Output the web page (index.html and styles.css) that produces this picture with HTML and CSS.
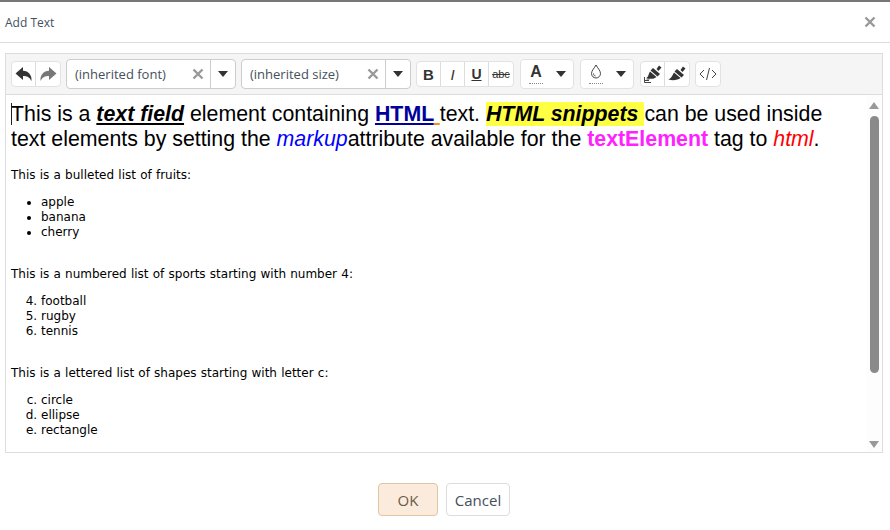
FILE: index.html
```html
<!DOCTYPE html>
<html lang="en">
<head>
    <meta charset="UTF-8">
    <meta name="viewport" content="width=device-width, initial-scale=1.0">
    <title>Add Text</title>
    <link rel="stylesheet" href="styles.css">
</head>
<body>

<div class="dialog">
    <div class="dialog-header">
        <span class="dialog-title">Add Text</span>
        <svg class="close-icon" width="12" height="12" viewBox="0 0 12 12"><path d="M1.5 1.5 L10.5 10.5 M10.5 1.5 L1.5 10.5"/></svg>
    </div>

    <div class="editor">
        <div class="toolbar">
            <div class="btn-group">
                <button class="tool-btn wide"><svg width="20" height="16" viewBox="0 0 20 16"><path class="dark" d="M9 1 L1.500 7.500 L9 14 L9 10 C13 10 15.500 11 17.500 15 C18 9 14.500 5 9 4.800 Z"/></svg></button>
                <button class="tool-btn wide"><svg width="20" height="16" viewBox="0 0 20 16"><path class="muted" d="M11 1 L18.500 7.500 L11 14 L11 10 C7 10 4.500 11 2.500 15 C2 9 5.500 5 11 4.800 Z"/></svg></button>
            </div>
            <div class="select-box">
                <span class="select-value">(inherited font)</span>
                <svg class="clear-icon" width="12" height="12" viewBox="0 0 12 12"><path d="M1.500 1.500 L10.500 10.500 M10.500 1.500 L1.500 10.500"/></svg>
                <span class="select-arrow"><span class="caret"></span></span>
            </div>
            <div class="select-box">
                <span class="select-value">(inherited size)</span>
                <svg class="clear-icon" width="12" height="12" viewBox="0 0 12 12"><path d="M1.500 1.500 L10.500 10.500 M10.500 1.500 L1.500 10.500"/></svg>
                <span class="select-arrow"><span class="caret"></span></span>
            </div>
            <div class="btn-group group-fmt">
                <button class="tool-btn fmt-bold">B</button>
                <button class="tool-btn fmt-italic">I</button>
                <button class="tool-btn fmt-under">U</button>
                <button class="tool-btn fmt-strike">abc</button>
            </div>
            <div class="color-btn">
                <span class="color-swatch">
                    <span class="letter-a">A</span>
                    <span class="squiggle"></span>
                </span>
                <span class="caret"></span>
            </div>
            <div class="color-btn">
                <span class="color-swatch">
                    <svg width="14" height="15" viewBox="0 0 14 15"><path class="outline" d="M7 1 C5.500 4 2.500 6.500 2.500 9.500 C2.500 12 4.500 14 7 14 C9.500 14 11.500 12 11.500 9.500 C11.500 6.500 8.500 4 7 1 Z M4.500 9.500 C4.500 11 5.500 12 6.500 12"/></svg>
                    <span class="squiggle"></span>
                </span>
                <span class="caret"></span>
            </div>
            <div class="btn-group">
                <button class="tool-btn brush"><svg width="22" height="20" viewBox="0 0 22 20"><path class="dark" d="M17 1.500 L19.500 3.500 L16.500 7 L14.500 5 Z M11 4 L18 10 L15.500 12.500 L8.500 6.500 Z M8 7.500 L14.500 13 C12 15 8.500 15.500 4.500 14 C6.500 12.500 6.500 10 8 7.500 Z"/><path class="thin" d="M2.500 13 V18.500 H9 M2.500 16.500 H7 M4.500 15 H7.500"/></svg></button>
                <button class="tool-btn brush"><svg width="22" height="20" viewBox="0 0 22 20"><path class="dark" d="M17 2.500 L19.500 4.500 L16.500 8 L14.500 6 Z M11 5 L18 11 L15.500 13.500 L8.500 7.500 Z M8 8.500 L14.500 14 C12 16 7 17 2.500 15.500 C5.500 14 6.500 11 8 8.500 Z"/></svg></button>
            </div>
            <div class="btn-group">
                <button class="tool-btn code"><svg width="18" height="14" viewBox="0 0 18 14"><path class="thin" d="M5 3 L1 7 L5 11 M13 3 L17 7 L13 11 M10.500 1 L7.500 13"/></svg></button>
            </div>
        </div>

        <div class="editor-body">
            <div class="content">
                <div class="lead"><span class="cursor"></span>This is a <b><i><u>text field</u></i></b> element containing <a class="html-link"><b>HTML</b></a><b class="orange-line"> </b>text. <span class="highlight"><b><i>HTML snippets</i></b>&nbsp;</span>can be used inside text elements by setting the <i class="blue">markup</i>attribute available for the <b class="magenta">textElement</b> tag to <i class="red">html</i>.</div>

                <p>This is a bulleted list of fruits:</p>
                <ul>
                    <li>apple</li>
                    <li>banana</li>
                    <li>cherry</li>
                </ul>
                <p class="spaced">This is a numbered list of sports starting with number 4:</p>
                <ol start="4">
                    <li>football</li>
                    <li>rugby</li>
                    <li>tennis</li>
                </ol>
                <p class="spaced">This is a lettered list of shapes starting with letter c:</p>
                <ol start="3" class="letters">
                    <li>circle</li>
                    <li>ellipse</li>
                    <li>rectangle</li>
                </ol>
            </div>
            <div class="scrollbar">
                <span class="arrow-up"></span>
                <span class="thumb"></span>
                <span class="arrow-down"></span>
            </div>
        </div>
    </div>

    <div class="dialog-footer">
        <button class="btn btn-ok">OK</button>
        <button class="btn btn-cancel">Cancel</button>
    </div>
</div>

</body>
</html>
```

FILE: styles.css
```css
html, body {
    margin: 0;
    height: 100%;
}
body {
    background-color: white;
    font-family: "Open Sans", sans-serif;
    overflow: hidden;
}
.dialog {
    height: 528px;
    border-top: 2px solid #777;
    display: flex;
    flex-direction: column;
}
.dialog-header {
    height: 40px;
    border-bottom: 1px solid #ddd;
    display: flex;
    align-items: center;
    justify-content: space-between;
    padding: 0 14px 0 5px;
}
.dialog-title {
    font-size: 12px;
    color: #44505c;
}
.close-icon path,
.clear-icon path {
    stroke: #999;
    stroke-width: 2.4;
    fill: none;
}
.editor {
    margin: 10px 7px 0 5px;
    height: 398px;
    border: 1px solid #ddd;
    display: flex;
    flex-direction: column;
}
.toolbar {
    height: 41px;
    box-sizing: border-box;
    background-color: #f5f5f5;
    border-bottom: 1px solid #ddd;
    display: flex;
    align-items: center;
    padding: 0 5px;
    flex-shrink: 0;
}
.btn-group {
    display: flex;
    height: 26px;
    box-sizing: border-box;
    background-color: white;
    border: 1px solid #e2e2e2;
    border-radius: 4px;
    margin-right: 5px;
}
.group-fmt {
    margin-right: 6px;
}
.tool-btn {
    width: 24px;
    padding: 0;
    border: none;
    border-right: 1px solid #ddd;
    background: none;
    display: flex;
    align-items: center;
    justify-content: center;
    font-family: "Liberation Sans", sans-serif;
    color: #333;
}
.tool-btn:last-child {
    border-right: none;
}
.dark {
    fill: #333;
}
.muted {
    fill: #777;
}
.thin {
    fill: none;
    stroke: #444;
    stroke-width: 1;
}
.fmt-bold {
    font-weight: bold;
    font-size: 15px;
}
.fmt-italic {
    font-style: italic;
    font-size: 15px;
}
.fmt-under {
    text-decoration: underline;
    font-weight: bold;
    font-size: 14px;
}
.fmt-strike {
    text-decoration: line-through;
    font-size: 11px;
}
.select-box {
    width: 170px;
    height: 30px;
    box-sizing: border-box;
    background-color: white;
    border: 1px solid #ccc;
    border-radius: 4px;
    margin-right: 5px;
    display: flex;
    align-items: center;
}
.select-value {
    flex: 1;
    padding-left: 8px;
    font-size: 13px;
    color: #44505c;
}
.clear-icon {
    margin-right: 6px;
}
.select-arrow {
    width: 24px;
    height: 100%;
    border-left: 1px solid #ccc;
    display: flex;
    align-items: center;
    justify-content: center;
}
.caret {
    width: 0;
    height: 0;
    border-left: 5px solid transparent;
    border-right: 5px solid transparent;
    border-top: 6px solid #333;
}
.color-btn {
    width: 54px;
    height: 30px;
    box-sizing: border-box;
    background-color: white;
    border: 1px solid #e2e2e2;
    border-radius: 4px;
    margin-right: 6px;
    display: flex;
    align-items: center;
    justify-content: space-between;
    padding: 0 7px 0 7px;
}
.color-swatch {
    width: 16px;
    display: flex;
    flex-direction: column;
    align-items: center;
}
.letter-a {
    font-family: "Liberation Sans", sans-serif;
    font-weight: bold;
    font-size: 16px;
    line-height: 15px;
    color: #333;
}
.outline {
    fill: none;
    stroke: #444;
    stroke-width: 1;
}
.squiggle {
    width: 14px;
    margin-top: 4px;
    border-bottom: 1px dotted #888;
}
.brush {
    width: 24px;
}
.code {
    width: 24px;
}
.editor-body {
    flex: 1;
    display: flex;
    min-height: 0;
}
.content {
    flex: 1;
    padding: 7px 5px 0;
    font-family: "DejaVu Sans", sans-serif;
    font-size: 12px;
    line-height: 15px;
    color: black;
    overflow: hidden;
}
.lead {
    position: relative;
    font-family: "Liberation Sans", sans-serif;
    font-size: 21.33px;
    line-height: 25px;
    margin-bottom: 16px;
    margin-right: 10px;
}
.cursor {
    position: absolute;
    left: 0;
    top: 1px;
    height: 22px;
    border-left: 1px solid #222;
}
.html-link {
    color: #00009c;
    text-decoration: underline;
}
.orange-line {
    text-decoration: underline;
    text-decoration-color: #f28c28;
}
.highlight {
    background-color: #ffff44;
}
.blue {
    color: #0000ff;
}
.magenta {
    color: #ff22ff;
}
.red {
    color: #ff0000;
}
p {
    margin: 12px 0;
    word-spacing: 0.4px;
}
p.spaced {
    margin-top: 27px;
}
ul, ol {
    margin: 12px 0;
    padding-left: 30px;
}
.letters {
    list-style-type: lower-alpha;
}
.scrollbar {
    width: 14px;
    box-sizing: border-box;
    background-color: #fdfdfd;
    display: flex;
    flex-direction: column;
    align-items: center;
    padding: 7px 0 3px;
    margin-right: 1px;
}
.thumb {
    width: 9px;
    height: 257px;
    margin: 7px 0 68px;
    background-color: #8a8a8a;
    border-radius: 5px;
}
.arrow-up, .arrow-down {
    width: 0;
    height: 0;
    border-left: 5px solid transparent;
    border-right: 5px solid transparent;
}
.arrow-up {
    border-bottom: 7px solid #999;
}
.arrow-down {
    border-top: 7px solid #999;
}
.dialog-footer {
    display: flex;
    justify-content: center;
    gap: 8px;
    margin-top: 30px;
    padding-right: 2px;
}
.btn {
    height: 33px;
    box-sizing: border-box;
    border-radius: 4px;
    font-family: "Open Sans", sans-serif;
    font-size: 15px;
    padding: 0;
}
.btn-ok {
    width: 60px;
    background-color: #fbebdc;
    border: 1px solid #e2c6a4;
    color: #6b5a48;
}
.btn-cancel {
    width: 64px;
    background-color: white;
    border: 1px solid #ddd;
    color: #44505c;
}
```
